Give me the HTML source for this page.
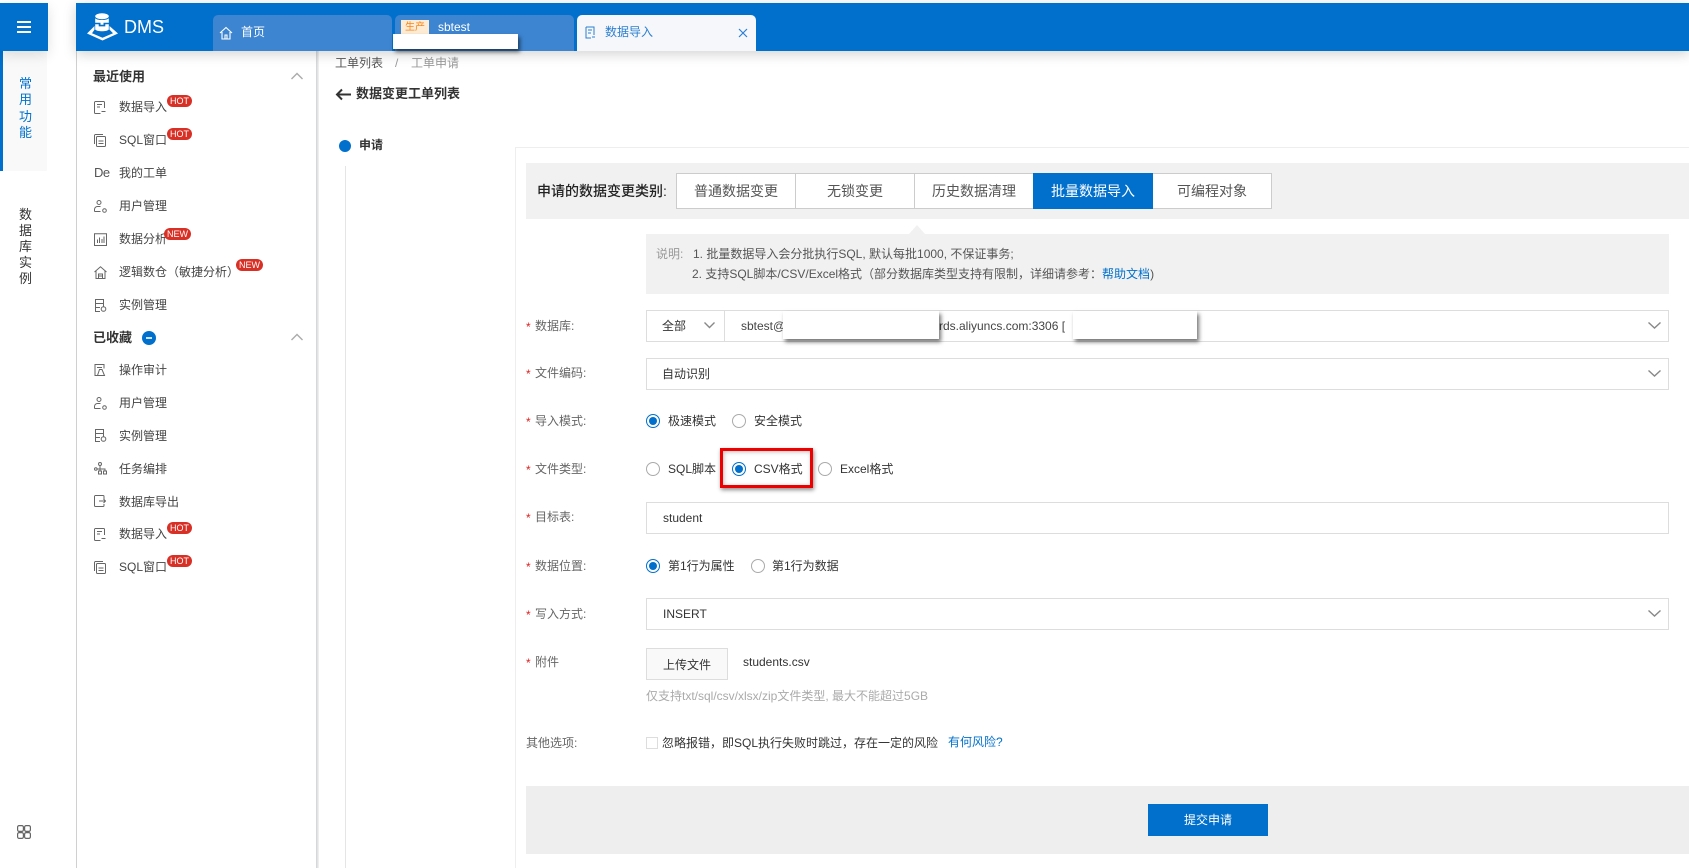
<!DOCTYPE html>
<html lang="zh"><head><meta charset="utf-8"><title>DMS</title>
<style>
html,body{margin:0;padding:0;background:#fff;width:1689px;height:868px;overflow:hidden}
body{position:relative;font-family:"Liberation Sans","Noto Sans CJK SC",sans-serif;font-size:12px;color:#333}
.a,.t{position:absolute}
.t{white-space:nowrap;line-height:20px}
.l{color:#666}.l i{position:absolute;left:-9px;top:1px;color:#e02020;font-style:normal}
.box{position:absolute;left:646px;width:1021px;height:30px;border:1px solid #ddd;background:#fff}
.r{position:absolute;width:12px;height:12px;border:1px solid #aaa;border-radius:50%;background:#fff}
.r.on{border-color:#0070cc}
.r.on:after{content:"";position:absolute;left:2px;top:2px;width:8px;height:8px;border-radius:50%;background:#0070cc}
.tab{position:absolute;top:15px;width:179px;height:36px;background:#3d85d1;border-radius:5px 5px 0 0}
.seg{position:absolute;top:173px;height:34px;width:118px;border:1px solid #ccc;border-left:0;background:#fff;text-align:center;line-height:34px;font-size:14px;color:#555}
.red{position:absolute;width:25px;height:12px;border-radius:6px;background:#d93026;color:#fff;font-size:9px;line-height:12px;text-align:center}
.ic{position:absolute;fill:none;stroke:#666;stroke-width:1}
.it{position:absolute;left:119px;white-space:nowrap;line-height:20px;color:#444}
.mask{position:absolute;background:#fff;box-shadow:2px 3px 4px rgba(0,0,0,.55)}
.ch{position:absolute;fill:none;stroke:#888;stroke-width:1.4}
</style></head><body>
<!-- top -->
<div class="a" style="left:0;top:3px;width:48px;height:48px;background:#0070cc;box-shadow:0 4px 12px rgba(0,0,0,.12);z-index:3"></div>
<div class="a" style="left:17px;top:21px;width:14px;height:2px;background:#fff;z-index:4"></div>
<div class="a" style="left:17px;top:26px;width:14px;height:2px;background:#fff;z-index:4"></div>
<div class="a" style="left:17px;top:31px;width:14px;height:2px;background:#fff;z-index:4"></div>
<div class="a" style="left:76px;top:3px;width:1613px;height:48px;background:#0070cc;box-shadow:0 3px 12px rgba(0,0,0,.18);z-index:2"></div>
<div style="position:absolute;left:0;top:0;width:1689px;height:51px;z-index:5">
<svg class="a" style="left:87px;top:13px" width="32" height="28" viewBox="0 0 32 28"><g fill="#fff"><ellipse cx="15" cy="3.200" rx="6.800" ry="3"/><path d="M8.200 5.200c2 2.400 11.600 2.400 13.600 0v4.600h-5.300v2h-3v-2H8.200zM8.200 11.200h3.500v2.200h6.600v-2.200h3.500v5.300c-2 2.400-11.600 2.400-13.600 0z"/><path d="M7.500 13 0 20.500 15.500 27.500 31 20.500 22.500 13v3.600l3.500 3.700-10.500 4.500L5 20.300l2.500-3.700z"/></g></svg>
<div class="t" style="left:124px;top:17px;font-size:18px;color:#fff">DMS</div>
<div class="tab" style="left:213px"></div>
<svg class="a" style="left:219px;top:26px;fill:none;stroke:#fff;stroke-width:1.100" width="14" height="14" viewBox="0 0 14 14"><path d="M1 7 7 1.500 13 7M3 6v7h8V6M6 13V9h2v4"/></svg>
<div class="t" style="left:241px;top:22px;color:#fff">首页</div>
<div class="tab" style="left:395px"></div>
<div class="a" style="left:401px;top:20px;width:28px;height:14px;background:#fdebd3;color:#f5861f;font-size:10px;line-height:15px;text-align:center">生产</div>
<div class="t" style="left:438px;top:17px;color:#fff">sbtest</div>
<div class="mask" style="left:393px;top:34px;width:125px;height:15px"></div>
<div class="tab" style="left:577px;background:#f5f7fa"></div>
<svg class="a" style="left:585px;top:26px;fill:none;stroke:#2c7fd0;stroke-width:1" width="11" height="14" viewBox="0 0 11 14"><path d="M1 1h8v8M1 1v11h5M3 4h4M3 7h3M7 11h3"/></svg>
<div class="t" style="left:605px;top:22px;color:#2c7fd0">数据导入</div>
<svg class="a" style="left:738px;top:28px;fill:none;stroke:#2c7fd0;stroke-width:1.200" width="10" height="10" viewBox="0 0 10 10"><path d="M1 1l8 8M9 1 1 9"/></svg>
</div>
<!-- left rail -->
<div class="a" style="left:0;top:51px;width:47px;height:120px;background:#f9f9f9"></div>
<div class="a" style="left:0;top:51px;width:3px;height:120px;background:#0070cc"></div>
<div class="a" style="left:18px;top:76px;width:15px;font-size:13px;line-height:16.300px;color:#0070cc;text-align:center">常<br>用<br>功<br>能</div>
<div class="a" style="left:18px;top:207px;width:15px;font-size:13px;line-height:16px;color:#333;text-align:center">数<br>据<br>库<br>实<br>例</div>
<svg class="a" style="left:17px;top:825px;fill:none;stroke:#666;stroke-width:1.200" width="14" height="14" viewBox="0 0 14 14"><rect x=".6" y=".6" width="5.800" height="5.800" rx="1.500"/><rect x="7.600" y=".6" width="5.800" height="5.800" rx="1.500"/><rect x=".6" y="7.600" width="5.800" height="5.800" rx="1.500"/><rect x="7.600" y="7.600" width="5.800" height="5.800" rx="1.500"/></svg>
<!-- sidebar -->
<div class="a" style="left:76px;top:51px;width:1px;height:817px;background:#d0d0d0"></div>
<div class="a" style="left:316px;top:51px;width:3px;height:817px;background:linear-gradient(90deg,#cfd2d6,#f4f4f4)"></div>
<div style="position:absolute;left:0;top:0;z-index:2">
<div class="t" style="left:93px;top:67px;font-size:13px;font-weight:bold;color:#333">最近使用</div>
<svg class="ch" style="left:291px;top:72px;stroke:#aaa" width="12" height="8" viewBox="0 0 12 8"><path d="M.5 7 6 1.500 11.500 7"/></svg>

<svg class="ic" style="left:94px;top:101px" width="12" height="13" viewBox="0 0 12 13"><path d="M10.500 7V1.500a1 1 0 0 0-1-1h-8a1 1 0 0 0-1 1v10a1 1 0 0 0 1 1h5M3 3.500h5M3 6h3M7.500 10.500h4"/></svg>
<div class="it" style="top:97px">数据导入</div><div class="red" style="left:167px;top:95px">HOT</div>
<svg class="ic" style="left:94px;top:134px" width="12" height="13" viewBox="0 0 12 13"><rect x="2.500" y="2.500" width="9" height="10" rx="1"/><path d="M.5 10V1.500a1 1 0 0 1 1-1H9M4.500 7h5M4.500 9.500h5"/></svg>
<div class="it" style="top:130px">SQL窗口</div><div class="red" style="left:167px;top:128px">HOT</div>
<div class="t" style="left:94px;top:163px;color:#555;font-size:13px;letter-spacing:-.5px">De</div><div class="it" style="top:163px">我的工单</div>
<svg class="ic" style="left:94px;top:200px" width="13" height="13" viewBox="0 0 13 13"><circle cx="5" cy="2.500" r="2"/><path d="M.5 11.500v-2a3 3 0 0 1 3-3h3M.5 11.500h6"/><circle cx="10.500" cy="10.500" r="1.800"/></svg>
<div class="it" style="top:196px">用户管理</div>
<svg class="ic" style="left:94px;top:233px" width="13" height="13" viewBox="0 0 13 13"><path d="M.5 12.500V.8h12v11.700zM3.500 10V6.500M5.500 10V4.500M8 10V6M10 10V3.500"/></svg>
<div class="it" style="top:229px">数据分析</div><div class="red" style="left:164px;top:228px;width:27px">NEW</div>
<svg class="ic" style="left:94px;top:266px" width="13" height="13" viewBox="0 0 13 13"><path d="M.5 6 6.500 .8l6 5.200M2 5v7.500h9V5M4.500 12V8h4v4M4.500 10h4"/></svg>
<div class="it" style="top:262px">逻辑数仓（敏捷分析）</div><div class="red" style="left:236px;top:259px;width:27px">NEW</div>
<svg class="ic" style="left:94px;top:299px" width="13" height="13" viewBox="0 0 13 13"><path d="M6 12.500H1.500V.5h8v7M1.500 4.500h8M1.500 8.500H6"/><circle cx="9.500" cy="10" r="2.300"/></svg>
<div class="it" style="top:295px">实例管理</div>

<div class="t" style="left:93px;top:328px;font-size:13px;font-weight:bold;color:#333">已收藏</div>
<div class="a" style="left:142px;top:331px;width:14px;height:14px;border-radius:50%;background:#0070cc"></div>
<div class="a" style="left:146px;top:337px;width:6px;height:2px;background:#cfe4f7"></div>
<svg class="ch" style="left:291px;top:333px;stroke:#aaa" width="12" height="8" viewBox="0 0 12 8"><path d="M.5 7 6 1.500 11.500 7"/></svg>

<svg class="ic" style="left:94px;top:364px" width="12" height="12" viewBox="0 0 12 12"><path d="M5 11.500H1V.5h9v4M3 3.500h5M5.500 5.500 3.500 11.500h7L8 5.500z"/></svg>
<div class="it" style="top:360px">操作审计</div>
<svg class="ic" style="left:94px;top:397px" width="13" height="13" viewBox="0 0 13 13"><circle cx="5" cy="2.500" r="2"/><path d="M.5 11.500v-2a3 3 0 0 1 3-3h3M.5 11.500h6"/><circle cx="10.500" cy="10.500" r="1.800"/></svg>
<div class="it" style="top:393px">用户管理</div>
<svg class="ic" style="left:94px;top:429px" width="13" height="13" viewBox="0 0 13 13"><path d="M6 12.500H1.500V.5h8v7M1.500 4.500h8M1.500 8.500H6"/><circle cx="9.500" cy="10" r="2.300"/></svg>
<div class="it" style="top:426px">实例管理</div>
<svg class="ic" style="left:94px;top:462px" width="13" height="13" viewBox="0 0 13 13"><circle cx="6" cy="2" r="1.500"/><circle cx="1.800" cy="7" r="1.300"/><rect x="4.500" y="9" width="3" height="3"/><rect x="9.500" y="9" width="3" height="3"/><path d="M6 3.500V9M3 7h8v2"/></svg>
<div class="it" style="top:459px">任务编排</div>
<svg class="ic" style="left:94px;top:495px" width="12" height="12" viewBox="0 0 12 12"><path d="M10 4V1.500a1 1 0 0 0-1-1H1.500a1 1 0 0 0-1 1v9a1 1 0 0 0 1 1H9a1 1 0 0 0 1-1V9M5 6h6.500M9.500 4l2 2-2 2"/></svg>
<div class="it" style="top:492px">数据库导出</div>
<svg class="ic" style="left:94px;top:528px" width="12" height="13" viewBox="0 0 12 13"><path d="M10.500 7V1.500a1 1 0 0 0-1-1h-8a1 1 0 0 0-1 1v10a1 1 0 0 0 1 1h5M3 3.500h5M3 6h3M7.500 10.500h4"/></svg>
<div class="it" style="top:524px">数据导入</div><div class="red" style="left:167px;top:522px">HOT</div>
<svg class="ic" style="left:94px;top:561px" width="12" height="13" viewBox="0 0 12 13"><rect x="2.500" y="2.500" width="9" height="10" rx="1"/><path d="M.5 10V1.500a1 1 0 0 1 1-1H9M4.500 7h5M4.500 9.500h5"/></svg>
<div class="it" style="top:557px">SQL窗口</div><div class="red" style="left:167px;top:555px">HOT</div>
</div>
<!-- content header -->
<div class="t" style="left:335px;top:53px;color:#555">工单列表</div>
<div class="t" style="left:395px;top:53px;color:#999">/</div>
<div class="t" style="left:411px;top:53px;color:#999">工单申请</div>
<svg class="a" style="left:335px;top:88px;fill:none;stroke:#333;stroke-width:2" width="16" height="13" viewBox="0 0 16 13"><path d="M16 6.500H2M7 1.500 2 6.500l5 5"/></svg>
<div class="t" style="left:356px;top:84px;font-size:13px;font-weight:bold;color:#333">数据变更工单列表</div>
<div class="a" style="left:339px;top:140px;width:12px;height:12px;border-radius:50%;background:#0070cc"></div>
<div class="t" style="left:359px;top:135px;font-weight:bold;color:#333">申请</div>
<div class="a" style="left:345px;top:166px;width:1px;height:702px;background:#e5e5e5"></div>
<!-- panel -->
<div class="a" style="left:515px;top:147px;width:1174px;height:721px;border-left:1px solid #eee;border-top:1px solid #eee;box-sizing:border-box"></div>
<div class="a" style="left:526px;top:163px;width:1163px;height:56px;background:#f1f1f1"></div>
<div class="t" style="left:537px;top:181px;font-size:14px;font-weight:500;color:#222">申请的数据变更类别:</div>
<div class="seg" style="left:676px;width:118px;border-left:1px solid #ccc">普通数据变更</div>
<div class="seg" style="left:796px">无锁变更</div>
<div class="seg" style="left:915px">历史数据清理</div>
<div class="seg" style="left:1033px;width:120px;background:#0070cc;border-color:#0070cc;color:#fff">批量数据导入</div>
<div class="seg" style="left:1153px">可编程对象</div>
<div class="a" style="left:909px;top:225px;width:0;height:0;border:8px solid transparent;border-top:0;border-bottom:9px solid #f1f1f1"></div>
<div class="a" style="left:646px;top:234px;width:1023px;height:60px;background:#f1f1f1"></div>
<div class="t" style="left:656px;top:244px;color:#999">说明:</div>
<div class="t" style="left:693px;top:244px;color:#555">1. 批量数据导入会分批执行SQL, 默认每批1000, 不保证事务;</div>
<div class="t" style="left:692px;top:264px;color:#555">2. 支持SQL脚本/CSV/Excel格式（部分数据库类型支持有限制，详细请参考：<span style="color:#0070cc">帮助文档</span>)</div>
<!-- db -->
<div class="t l" style="left:535px;top:316px"><i>*</i>数据库:</div>
<div class="box" style="top:310px"></div>
<div class="a" style="left:724px;top:310px;width:1px;height:32px;background:#ddd"></div>
<div class="t" style="left:662px;top:316px">全部</div>
<svg class="ch" style="left:704px;top:322px" width="11" height="7" viewBox="0 0 11 7"><path d="M.5 .5 5.500 5.500 10.500 .5"/></svg>
<div class="t" style="left:741px;top:316px;color:#444">sbtest@</div>
<div class="t" style="left:939px;top:316px;color:#444">rds.aliyuncs.com:3306 [</div>
<div class="mask" style="left:783px;top:311px;width:156px;height:28px"></div>
<div class="mask" style="left:1073px;top:311px;width:124px;height:28px"></div>
<svg class="ch" style="left:1648px;top:322px" width="13" height="7" viewBox="0 0 13 7"><path d="M.5 .5 6.500 6 12.500 .5"/></svg>
<div class="t l" style="left:535px;top:363px"><i>*</i>文件编码:</div>
<div class="box" style="top:358px"></div>
<div class="t" style="left:662px;top:364px">自动识别</div>
<svg class="ch" style="left:1648px;top:370px" width="13" height="7" viewBox="0 0 13 7"><path d="M.5 .5 6.500 6 12.500 .5"/></svg>
<!-- mode -->
<div class="t l" style="left:535px;top:411px"><i>*</i>导入模式:</div>
<div class="r on" style="left:646px;top:414px"></div><div class="t" style="left:668px;top:411px">极速模式</div>
<div class="r" style="left:732px;top:414px"></div><div class="t" style="left:754px;top:411px">安全模式</div>
<div class="t l" style="left:535px;top:459px"><i>*</i>文件类型:</div>
<div class="r" style="left:646px;top:462px"></div><div class="t" style="left:668px;top:459px">SQL脚本</div>
<div class="r on" style="left:732px;top:462px"></div><div class="t" style="left:754px;top:459px">CSV格式</div>
<div class="r" style="left:818px;top:462px"></div><div class="t" style="left:840px;top:459px">Excel格式</div>
<div class="a" style="left:720px;top:448px;width:87px;height:34px;border:3px solid #ee0000;box-shadow:1px 2px 4px rgba(0,0,0,.45),inset 1px 1px 4px rgba(0,0,0,.25)"></div>
<div class="t l" style="left:535px;top:507px"><i>*</i>目标表:</div>
<div class="box" style="top:502px"></div>
<div class="t" style="left:663px;top:508px">student</div>
<div class="t l" style="left:535px;top:556px"><i>*</i>数据位置:</div>
<div class="r on" style="left:646px;top:559px"></div><div class="t" style="left:668px;top:556px">第1行为属性</div>
<div class="r" style="left:751px;top:559px"></div><div class="t" style="left:772px;top:556px">第1行为数据</div>
<div class="t l" style="left:535px;top:604px"><i>*</i>写入方式:</div>
<div class="box" style="top:598px"></div>
<div class="t" style="left:663px;top:604px">INSERT</div>
<svg class="ch" style="left:1648px;top:610px" width="13" height="7" viewBox="0 0 13 7"><path d="M.5 .5 6.500 6 12.500 .5"/></svg>
<div class="t l" style="left:535px;top:652px"><i>*</i>附件</div>
<div class="a" style="left:646px;top:648px;width:80px;height:30px;background:#f9f9f9;border:1px solid #ddd;text-align:center;line-height:32px">上传文件</div>
<div class="t" style="left:743px;top:652px">students.csv</div>
<div class="t" style="left:646px;top:686px;color:#aaa">仅支持txt/sql/csv/xlsx/zip文件类型, 最大不能超过5GB</div>
<div class="t l" style="left:526px;top:733px">其他选项:</div>
<div class="a" style="left:646px;top:737px;width:10px;height:10px;border:1px solid #ddd"></div>
<div class="t" style="left:662px;top:733px">忽略报错，即SQL执行失败时跳过，存在一定的风险</div>
<div class="t" style="left:948px;top:732px;color:#0070cc">有何风险?</div>
<div class="a" style="left:526px;top:786px;width:1163px;height:68px;background:#eee"></div>
<div class="a" style="left:1148px;top:804px;width:120px;height:32px;background:#0070cc;color:#fff;text-align:center;line-height:32px">提交申请</div>
</body></html>
